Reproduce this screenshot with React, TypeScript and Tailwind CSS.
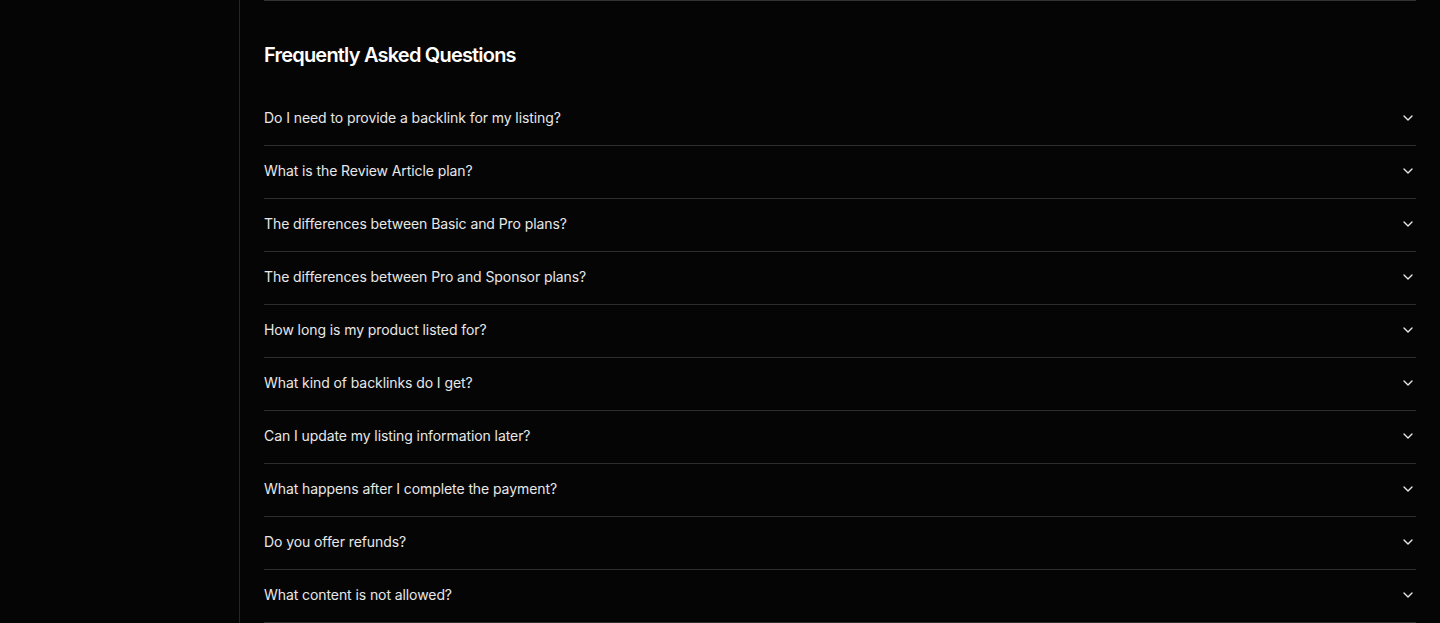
import { ChevronDown } from 'lucide-react';

const questions = [
  'Do I need to provide a backlink for my listing?',
  'What is the Review Article plan?',
  'The differences between Basic and Pro plans?',
  'The differences between Pro and Sponsor plans?',
  'How long is my product listed for?',
  'What kind of backlinks do I get?',
  'Can I update my listing information later?',
  'What happens after I complete the payment?',
  'Do you offer refunds?',
  'What content is not allowed?',
];

export default function App() {
  return (
    <div
      className="flex h-[623px] overflow-hidden bg-[#050505] text-white"
      style={{ fontFamily: 'Inter, "Noto Sans", sans-serif' }}
    >
      <aside className="w-[240px] shrink-0 border-r border-[#262626]" />
      <main className="flex-1 px-6">
        <div className="border-t border-[#333333]" />
        <h2 className="mt-10 mb-6 text-xl font-semibold leading-7 tracking-[-0.04em] text-white">
          Frequently Asked Questions
        </h2>
        <div>
          {questions.map(q => (
            <button
              key={q}
              className="flex w-full items-center justify-between border-b border-[#2e2e2e] pt-[15px] pb-[17px] text-left"
            >
              <span className="text-sm leading-5 tracking-[-0.006em] text-[#e8e8e8]">{q}</span>
              <ChevronDown className="h-4 w-4 text-[#e8e8e8]" strokeWidth={2} />
            </button>
          ))}
        </div>
      </main>
    </div>
  );
}
